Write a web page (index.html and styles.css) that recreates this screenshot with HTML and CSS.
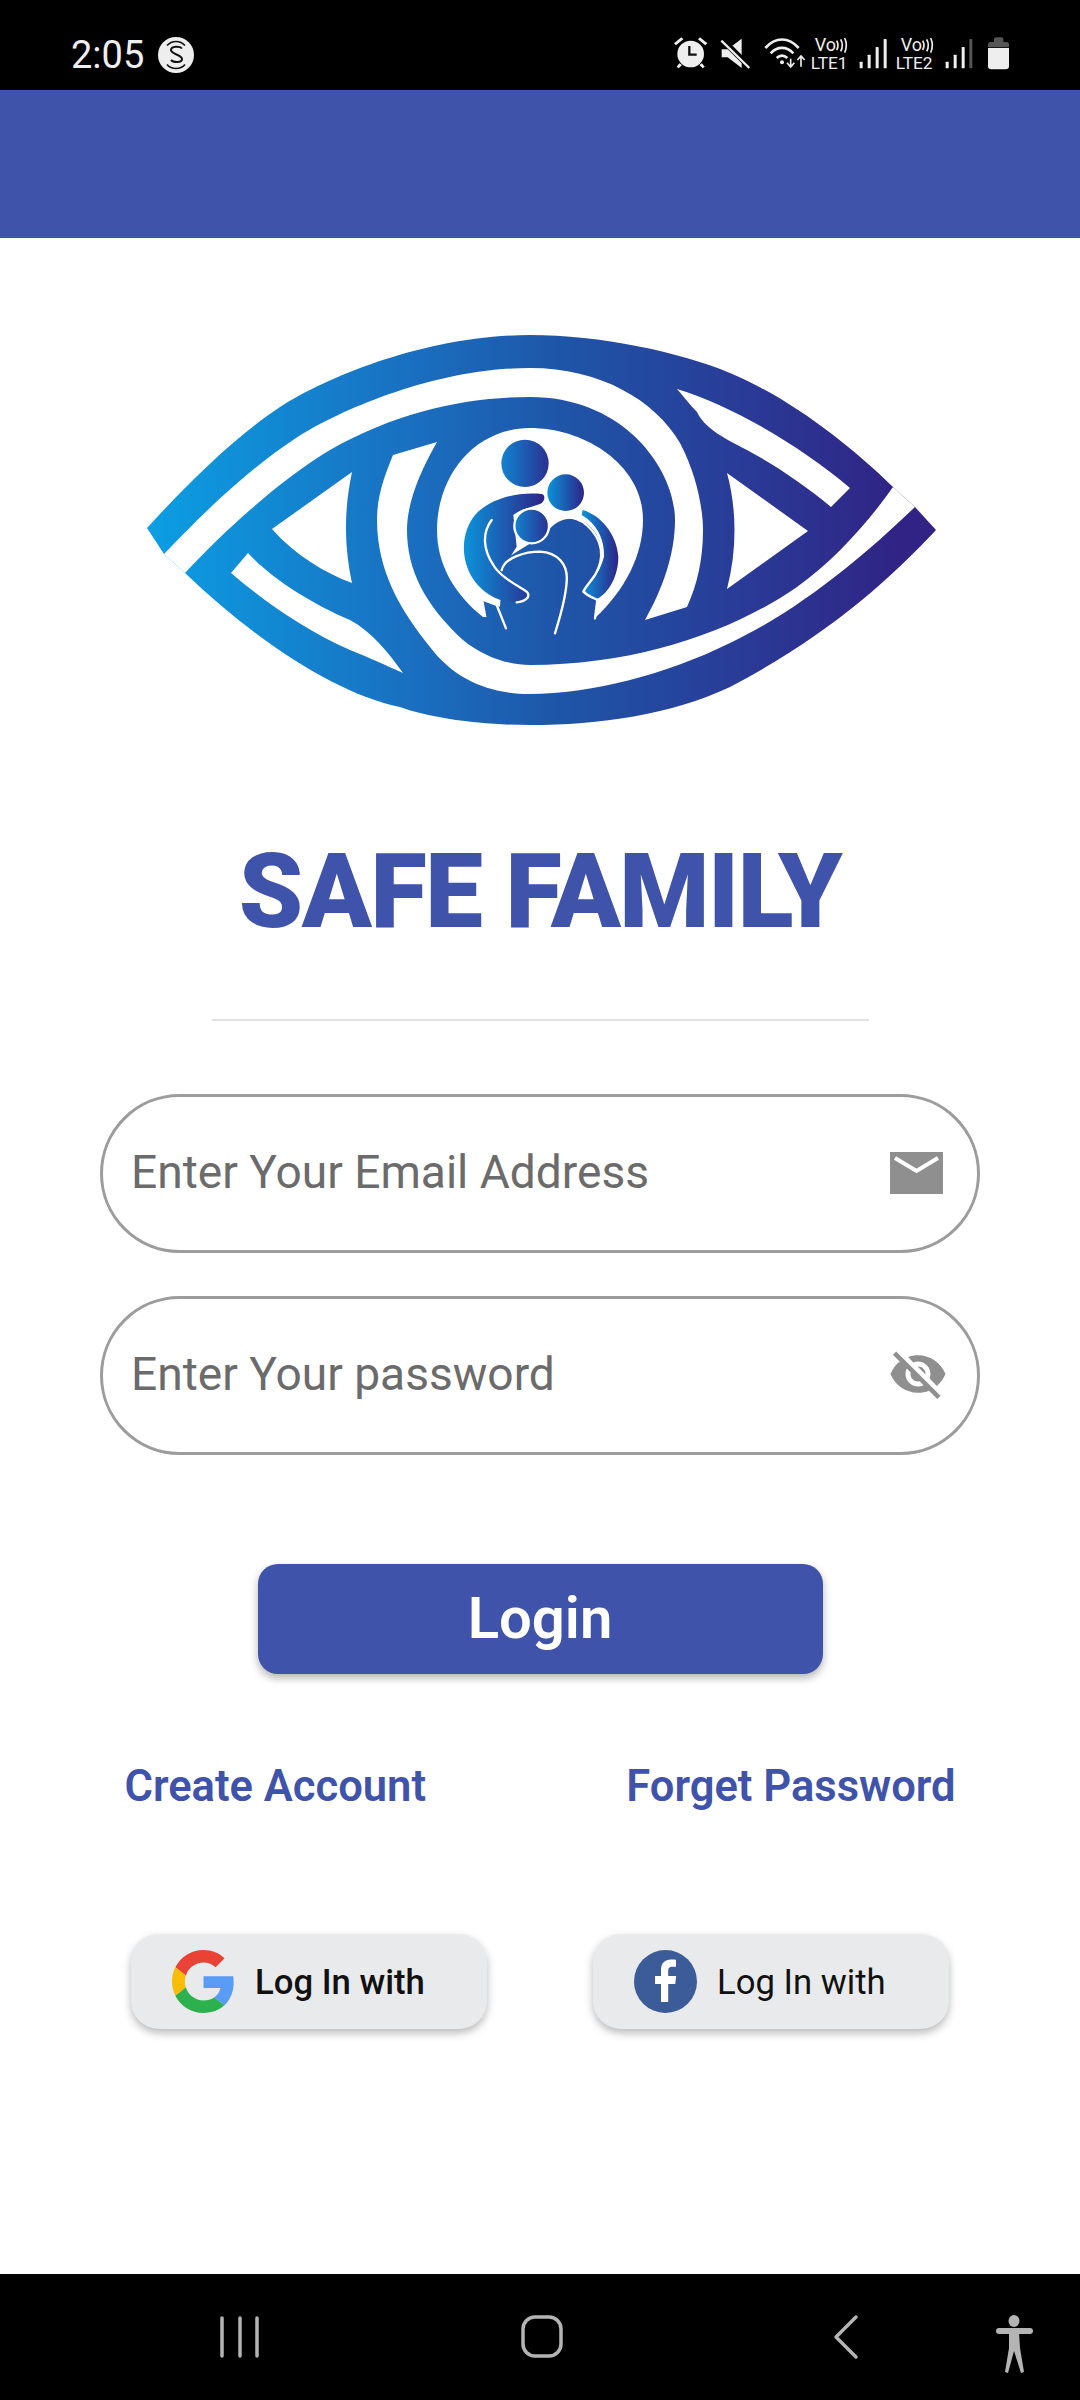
FILE: index.html
```html
<!DOCTYPE html>
<html lang="en">
<head>
<meta charset="utf-8">
<title>Safe Family</title>
<link rel="stylesheet" href="styles.css">
</head>
<body>
<div class="phone">
  <header class="status">
    <span class="clock">2:05</span>
    <svg class="s-badge" viewBox="0 0 36 36" width="36" height="36" aria-hidden="true">
      <circle cx="18" cy="18" r="18" fill="#eee"/>
      <path d="M24 11.500c-2-2.600-11-2.800-11 1.600 0 4.400 11 4.400 11 9 0 4-8.800 3.600-11 .9" fill="none" stroke="#111" stroke-width="2"/>
      <path d="M9 8.500a12 12 0 0 1 18 0M9 27.500a12 12 0 0 0 18 0" fill="none" stroke="#111" stroke-width="1.600"/>
    </svg>
    <svg class="status-icons" viewBox="0 0 1080 210" width="360" height="70" aria-hidden="true">
      <g fill="#eee">
        <circle cx="92" cy="102" r="40"/>
        <path d="M48 76l22-18-6-6-22 18zM136 76l-22-18 6-6 22 18zM58 130l-8 10 6 5 10-10zM126 130l8 10-6 5-10-10z"/>
        <path d="M185 88h18l42-32v88l-42-32h-18z"/>
      </g>
      <path d="M88 78v26h22" fill="none" stroke="#111" stroke-width="7"/>
      <path d="M180 52l92 92" stroke="#000" stroke-width="18"/>
      <path d="M184 62l84 82" stroke="#eee" stroke-width="7"/>
      <g fill="none" stroke="#eee" stroke-width="8">
        <path d="M316 84c30-34 70-34 100 0"/>
        <path d="M332 100c20-22 48-22 68 0"/>
        <path d="M350 114c10-9 22-9 32 0"/>
        <path d="M392 116v24M381 128l11 13 11-13M423 140v-30M412 120l11-12 11 12" stroke-width="5"/>
      </g>
      <circle cx="366" cy="127" r="6" fill="#eee"/>
      <text class="net net-top" x="464" y="94">Vo</text>
      <path d="M530 62q8 14 0 28M542 58q10 18 0 36M554 54q10 22 0 44" fill="none" stroke="#eee" stroke-width="5"/>
      <text class="net" x="452" y="146">LTE1</text>
      <g fill="#eee">
        <rect x="599" y="125" width="9" height="20" rx="2"/><rect x="623" y="104" width="9" height="41" rx="2"/><rect x="647" y="81" width="9" height="64" rx="2"/><rect x="671" y="57" width="9" height="88" rx="2"/>
      </g>
      <text class="net net-top" x="722" y="94">Vo</text>
      <path d="M788 62q8 14 0 28M800 58q10 18 0 36M812 54q10 22 0 44" fill="none" stroke="#eee" stroke-width="5"/>
      <text class="net" x="707" y="146">LTE2</text>
      <g fill="#eee">
        <rect x="857" y="125" width="9" height="20" rx="2"/><rect x="881" y="104" width="9" height="41" rx="2"/><rect x="905" y="81" width="9" height="64" rx="2"/>
      </g>
      <rect x="928" y="57" width="9" height="88" rx="2" fill="#555"/>
      <path d="M1002 66v-8q0-6 6-6h16q6 0 6 6v8h9q8 0 8 8v8h-63v-8q0-8 8-8z" fill="#555"/>
      <path d="M984 84h63v54q0 10-10 10h-43q-10 0-10-10z" fill="#eee"/>
    </svg>
  </header>

  <div class="appbar"></div>

  <main class="content">
    <svg class="logo" viewBox="130 320 820 420" width="820" height="420" role="img" aria-label="Safe Family logo">
      <defs>
        <linearGradient id="eye" gradientUnits="userSpaceOnUse" x1="145" y1="0" x2="900" y2="0">
          <stop offset="0" stop-color="#0b9fe3"/>
          <stop offset=".35" stop-color="#1a6fc0"/>
          <stop offset=".55" stop-color="#1f55a8"/>
          <stop offset=".8" stop-color="#2a3a96"/>
          <stop offset="1" stop-color="#302385"/>
        </linearGradient>
        <linearGradient id="body" gradientUnits="userSpaceOnUse" x1="-765" y1="0" x2="1500" y2="0">
          <stop offset="0" stop-color="#0b9fe3"/>
          <stop offset=".35" stop-color="#1a6fc0"/>
          <stop offset=".55" stop-color="#1f55a8"/>
          <stop offset=".8" stop-color="#2a3a96"/>
          <stop offset="1" stop-color="#302385"/>
        </linearGradient>
        <linearGradient id="fig">
          <stop offset="0" stop-color="#0c93da"/>
          <stop offset="1" stop-color="#2d2487"/>
        </linearGradient>
        <linearGradient id="fig-head">
          <stop offset="0" stop-color="#1283d0"/>
          <stop offset="1" stop-color="#2a3190"/>
        </linearGradient>
      </defs>
      <path fill="url(#eye)" d="M147,528 C180,492 230,440 280,407 C330,375 430,335 530,335 C600,335 680,352 730,373 C790,398 850,445 893,487 L915,507 L936,530 C885,585 820,640 730,687 C670,715 600,725 530,725 C480,725 430,718 400,707 C340,695 260,645 185,573 L164,554 Z"/>
      <g fill="#fff">
        <path d="M164,554 C195,522 240,475 296,438 C345,407 440,368 530,368 C600,368 655,400 680,443 C697,475 703,510 703,530 C703,560 697,585 687,607 L645,620 C662,590 675,555 675,520 C675,470 625,397 530,397 C470,397 400,410 330,450 C280,480 225,530 185,573 Z"/>
        <path d="M915,507 C865,555 800,610 730,643 C665,675 590,694 530,694 C490,694 455,680 430,647 C400,610 377,570 377,520 C377,495 385,475 393,455 L437,442 C418,475 407,505 407,530 C407,570 425,605 463,640 C485,658 510,665 530,665 C640,665 735,630 797,587 C835,560 870,520 893,487 Z"/>
        <path d="M530,428 C585,428 643,465 643,520 C643,555 625,590 595,618 L483,617 C455,595 437,565 437,530 C437,475 475,428 530,428 Z"/>
        <path d="M272,529 L352,472 C345,505 343,540 352,583 C325,573 295,555 272,529 Z"/>
        <path d="M231,573 L248,553 C270,577 310,603 350,620 C372,632 388,652 403,673 C385,665 370,658 350,650 C305,630 265,602 231,573 Z"/>
        <path d="M727,473 L808,531 L727,589 C737,550 737,510 727,473 Z"/>
        <path d="M677,389 C730,405 800,445 850,488 L831,507 C805,485 775,465 747,450 C720,436 705,428 697,412 C690,405 685,398 677,389 Z"/>
      </g>
      <g transform="translate(400 400) scale(.33333)">
        <path fill="url(#body)" d="M250,600 L300,620 L310,480 L440,400 C470,350 530,345 565,375 C605,410 620,465 585,525 C570,550 555,565 550,575 L590,600 L585,655 L585,760 L260,760 L260,655 Z"/>
        <path fill="url(#fig)" d="M425,282 C340,275 265,300 225,345 C185,395 180,470 215,530 C245,580 300,610 350,605 C385,602 395,575 365,560 C340,548 315,530 305,510 L350,440 L340,345 C365,325 400,320 420,312 C435,305 438,285 425,282 Z"/>
        <path fill="url(#fig)" d="M548,330 C600,345 650,400 655,470 C655,530 625,580 590,597 C570,595 555,580 555,570 C570,545 600,520 612,470 C615,420 590,370 545,345 Z"/>
        <circle cx="375" cy="190" r="71" fill="url(#fig-head)"/>
        <circle cx="497" cy="278" r="55" fill="url(#fig)"/>
        <g fill="none" stroke="#fff" stroke-width="7" stroke-linecap="round" stroke-linejoin="round">
          <path d="M275,360 C245,400 250,450 280,495 C300,530 350,555 380,575 C395,590 375,605 350,607"/>
          <path d="M305,510 C315,470 380,455 420,455 C470,458 505,490 500,545 C497,600 480,650 465,700"/>
          <path d="M250,600 L290,615 L318,685"/>
          <path d="M450,362 C490,345 530,350 560,375 C610,420 615,475 585,525 C570,548 552,565 550,575 C565,590 585,595 592,600 L585,655"/>
        </g>
        <circle cx="395" cy="378" r="52" fill="url(#fig-head)" stroke="#fff" stroke-width="7"/>
      </g>
    </svg>

    <h1 class="title">SAFE FAMILY</h1>
    <hr class="divider">

    <form class="fields">
      <div class="field">
        <span class="placeholder">Enter Your Email Address</span>
        <svg class="mail" viewBox="0 0 53 42" width="53" height="42" aria-hidden="true">
          <rect width="53" height="42" fill="#8f8f8f"/>
          <path d="M5 6l21.500 13L48 6" fill="none" stroke="#fff" stroke-width="4"/>
        </svg>
      </div>
      <div class="field">
        <span class="placeholder">Enter Your password</span>
        <svg class="eye-off" viewBox="0 0 24 24" width="60" height="60" aria-hidden="true">
          <path fill="#8f8f8f" d="M12 7c2.760 0 5 2.240 5 5 0 .65-.13 1.260-.36 1.830l2.920 2.920c1.510-1.260 2.700-2.890 3.430-4.750-1.730-4.390-6-7.500-11-7.500-1.400 0-2.740.25-3.980.7l2.160 2.160C10.740 7.130 11.350 7 12 7zM2 4.270l2.280 2.280.46.46C3.080 8.300 1.780 10.020 1 12c1.730 4.390 6 7.500 11 7.500 1.550 0 3.030-.3 4.380-.84l.42.42L19.730 22 21 20.730 3.270 3 2 4.270zM7.530 9.800l1.550 1.550c-.05.21-.08.43-.08.65 0 1.660 1.340 3 3 3 .22 0 .44-.03.65-.08l1.550 1.550c-.67.33-1.410.53-2.200.53-2.760 0-5-2.240-5-5 0-.79.2-1.530.53-2.200zm4.310-.78l3.150 3.150.02-.16c0-1.660-1.340-3-3-3l-.17.01z"/>
        </svg>
      </div>
    </form>

    <button class="login" type="button">Login</button>

    <div class="links">
      <a class="link">Create Account</a>
      <a class="link">Forget Password</a>
    </div>

    <div class="social">
      <button class="social-btn" type="button">
        <svg viewBox="0 0 48 48" width="63" height="63" aria-hidden="true">
          <path fill="#EA4335" d="M24 9.500c3.540 0 6.710 1.220 9.210 3.600l6.850-6.850C35.900 2.380 30.470 0 24 0 14.620 0 6.510 5.380 2.560 13.220l7.980 6.190C12.430 13.720 17.740 9.500 24 9.500z"/>
          <path fill="#5A9BF6" d="M46.980 24.550c0-1.570-.15-3.090-.38-4.550H24v9.020h12.940c-.58 2.960-2.260 5.480-4.780 7.180l7.730 6c4.510-4.180 7.090-10.360 7.090-17.650z"/>
          <path fill="#FBBC05" d="M10.530 28.590c-.5-1.450-.78-2.990-.78-4.590s.27-3.140.78-4.590l-7.980-6.190C.92 16.460 0 20.120 0 24c0 3.880.92 7.540 2.560 10.780l7.970-6.190z"/>
          <path fill="#2DB14F" d="M24 48c6.480 0 11.930-2.130 15.890-5.810l-7.730-6c-2.150 1.450-4.920 2.300-8.160 2.300-6.260 0-11.570-4.220-13.470-9.910l-7.980 6.190C6.510 42.620 14.620 48 24 48z"/>
        </svg>
        <span class="social-label social-label-strong">Log In with</span>
      </button>
      <button class="social-btn" type="button">
        <svg viewBox="0 0 63 63" width="63" height="63" aria-hidden="true">
          <circle cx="31.500" cy="31.500" r="31.500" fill="#3b5b99"/>
          <path fill="#fff" d="M27 52V34h-6v-8h6v-6c0-7 4-10.500 10-10.500 2.500 0 4.500.2 5 .3v7h-3.500c-3.500 0-4.300 1.700-4.300 4.200v5h8l-1 8h-7v18z"/>
        </svg>
        <span class="social-label">Log In with</span>
      </button>
    </div>
  </main>

  <nav class="navbar">
    <svg viewBox="0 0 1080 126" width="1080" height="126" aria-hidden="true">
      <g fill="none" stroke="#b4b4b4" stroke-linecap="round">
        <path d="M222 44v38M240 44v38M257 44v38" stroke-width="3.500"/>
        <rect x="523" y="43" width="38" height="39" rx="12" stroke-width="3.500"/>
        <path d="M856 43l-20 20 20 20" stroke-width="3.500" stroke-linejoin="round"/>
      </g>
      <g fill="#b4b4b4">
        <ellipse cx="1014" cy="47" rx="5.500" ry="6"/>
        <rect x="996" y="54" width="37" height="6" rx="3"/>
        <path d="M1009 58h10l1 16 4 24-3 1-7-22-6 22-3-1 4-24z"/>
      </g>
    </svg>
  </nav>
</div>
</body>
</html>
```

FILE: styles.css
```css
* { box-sizing: border-box; }

html, body {
  margin: 0;
  padding: 0;
  background: #fff;
}

body {
  font-family: Roboto, "Liberation Sans", sans-serif;
}

.phone {
  width: 1080px;
  height: 2400px;
  display: flex;
  flex-direction: column;
  overflow: hidden;
}

.status {
  height: 90px;
  flex: none;
  background: #000;
  display: flex;
  align-items: center;
  padding: 20px 60px 0 71px;
}

.clock {
  color: #eee;
  font-size: 38px;
  line-height: 1;
}

.s-badge { margin-left: 14px; }

.status-icons { margin-left: auto; }

.net {
  fill: #eee;
  font-family: Roboto, sans-serif;
  font-size: 52px;
}

.net-top { font-size: 54px; }

.appbar {
  height: 148px;
  flex: none;
  background: #3f53ab;
}

.content {
  flex: 1;
  display: flex;
  flex-direction: column;
  align-items: center;
  padding-top: 82px;
}

.logo { display: block; flex: none; }

.title {
  margin: 96px 0 0;
  color: #3f53ab;
  font-size: 103px;
  font-weight: 900;
  line-height: 112px;
  letter-spacing: -1.500px;
}

.divider {
  width: 657px;
  height: 2px;
  margin: 71px 0 0;
  border: 0;
  background: #e2e2e2;
}

.fields {
  margin-top: 73px;
  display: flex;
  flex-direction: column;
  gap: 43px;
}

.field {
  width: 880px;
  height: 159px;
  border: 3px solid #9c9c9c;
  border-radius: 79.500px;
  display: flex;
  align-items: center;
  justify-content: space-between;
  padding: 0 29px 3px 28px;
}

.placeholder {
  color: #6b6b6b;
  font-size: 46.100px;
}

.mail { margin: 2px 5px 0 0; }

.eye-off { margin-right: 0; }

.login {
  width: 565px;
  height: 110px;
  margin-top: 109px;
  border: 0;
  border-radius: 20px;
  background: #3f53ab;
  color: #fff;
  font-family: inherit;
  font-size: 58px;
  font-weight: 600;
  padding: 0 0 2px;
  box-shadow: 0 4px 8px rgba(0, 0, 0, .3);
}

.links {
  width: 831px;
  margin-top: 85px;
  display: flex;
  justify-content: space-between;
}

.link {
  color: #3f53ab;
  font-size: 43.500px;
  font-weight: 600;
  line-height: 56px;
}

.social {
  width: 818px;
  margin-top: 119px;
  display: flex;
  justify-content: space-between;
}

.social-btn {
  width: 356px;
  height: 95px;
  border: 0;
  border-radius: 28px;
  background: #e9eaec;
  display: flex;
  align-items: center;
  gap: 20px;
  padding: 0 0 0 41px;
  font-family: inherit;
  box-shadow: 0 4px 8px rgba(0, 0, 0, .28);
}

.social-label {
  color: #111;
  font-size: 34.700px;
  font-weight: 400;
}

.social-label-strong { font-weight: 500; }

.navbar {
  height: 126px;
  flex: none;
  background: #000;
}

.navbar svg { display: block; }
```
